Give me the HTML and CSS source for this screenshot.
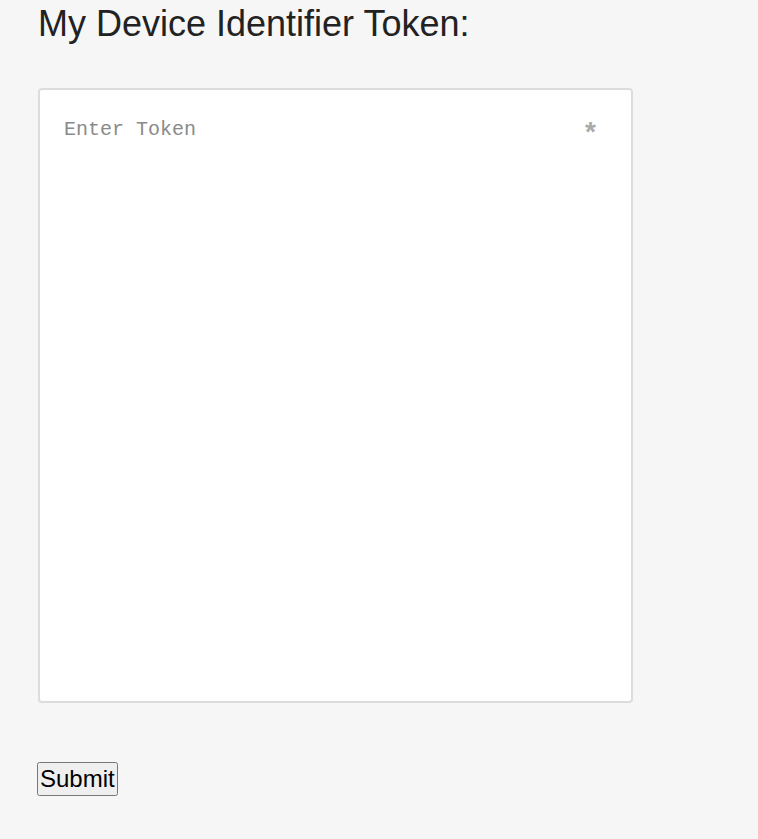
FILE: index.html
```html
<!DOCTYPE html>
<html lang="en">
<head>
  <meta charset="UTF-8" />
  <meta name="viewport" content="width=device-width, initial-scale=1.0"/>
  <title>Device Token</title>
  <link rel="stylesheet" href="styles.css">
</head>
<body>
  <form class="token-form">
    <h1 class="title">My Device Identifier Token:</h1>
    <div class="field">
      <textarea class="token-input" placeholder="Enter Token"></textarea>
      <span class="required">*</span>
    </div>
    <button type="submit" class="submit-btn">Submit</button>
  </form>
</body>
</html>
```

FILE: styles.css
```css
body {
  background-color: #f6f6f6;
  color: #222;
  font-family: "Liberation Sans", Arial, sans-serif;
  margin: 0;
  padding: 0 0 0 37px;
}
.title {
  font-size: 36px;
  font-weight: normal;
  margin: 4px 0 0 1px;
  line-height: 40px;
}
.field {
  position: relative;
  width: 595px;
  margin-top: 44px;
}
.token-input {
  display: block;
  box-sizing: border-box;
  width: 595px;
  height: 615px;
  margin-left: 1px;
  padding: 28px 24px;
  border: 2px solid #dcdcdc;
  border-radius: 4px;
  background-color: #fff;
  font-family: "Liberation Mono", "Courier New", monospace;
  font-size: 20px;
  resize: none;
  outline: none;
}
.token-input::placeholder {
  color: #8a8a8a;
}
.required {
  position: absolute;
  top: 28px;
  right: 36px;
  color: #aaa;
  font-size: 28px;
  font-weight: bold;
}
.submit-btn {
  margin-top: 59px;
  font-family: "Liberation Sans", Arial, sans-serif;
  font-size: 24px;
  line-height: 26px;
  color: #000;
  padding: 2px 1px;
}
```
